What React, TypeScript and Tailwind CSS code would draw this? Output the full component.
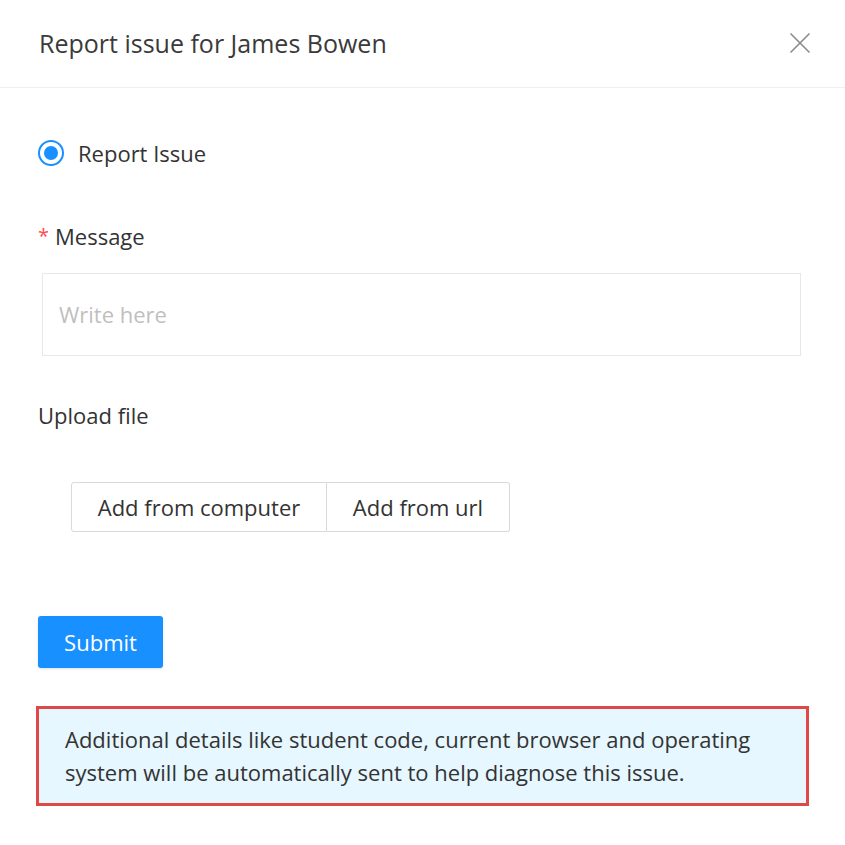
import { X } from "lucide-react";

export default function App() {
  return (
    <div className="w-[845px] h-[845px] bg-white font-['Open_Sans',sans-serif] text-[#333]">
      {/* header */}
      <div className="h-[88px] flex items-center justify-between pl-[39px] pr-[27px] border-b border-[#f0f0f0]">
        <h1 className="text-[25px] leading-[30px] text-[#3a3a3a] -mt-[2px]">Report issue for James Bowen</h1>
        <X className="w-[36px] h-[36px] text-[#8c8c8c] -mt-[2px]" strokeWidth={1.1} />
      </div>

      <div className="px-[38px] pt-[50px]">
        <label className="flex items-center gap-[14px] h-[30px]">
          <span className="w-[26px] h-[26px] rounded-full border-[2px] border-[#1890ff] flex items-center justify-center">
            <span className="w-[14px] h-[14px] rounded-full bg-[#1890ff]" />
          </span>
          <span className="text-[22px] leading-[30px]">Report Issue</span>
        </label>

        <div className="mt-[53px] flex items-center text-[22px] leading-[30px]">
          <span className="text-[#ff4d4f] mr-[6px] text-[20px]">*</span>
          Message
        </div>

        <div className="mt-[22px] ml-[4px] w-[759px] h-[83px] border border-[#e8e8e8] flex items-center px-[16px]">
          <span className="text-[22px] text-[#bfbfbf]">Write here</span>
        </div>

        <div className="mt-[44px] text-[22px] leading-[30px]">Upload file</div>

        <div className="mt-[52px] ml-[33px] flex">
          <button className="h-[50px] w-[256px] border border-[#d9d9d9] rounded-l-[3px] text-[22px]">
            Add from computer
          </button>
          <button className="h-[50px] w-[183px] border border-l-0 border-[#d9d9d9] rounded-r-[3px] text-[22px]">
            Add from url
          </button>
        </div>

        <button className="block mt-[84px] h-[52px] w-[125px] bg-[#1890ff] text-white text-[22px] rounded-[3px] shadow-sm">
          Submit
        </button>

        <div className="mt-[38px] -ml-[2px] w-[773px] border-[3px] border-[#e04848] bg-[#e6f7ff] px-[26px] pt-[14px] pb-[14px] text-[22px] leading-[33px] text-[#333]">
          Additional details like student code, current browser and operating system will be automatically sent to help diagnose this issue.
        </div>
      </div>
    </div>
  );
}
